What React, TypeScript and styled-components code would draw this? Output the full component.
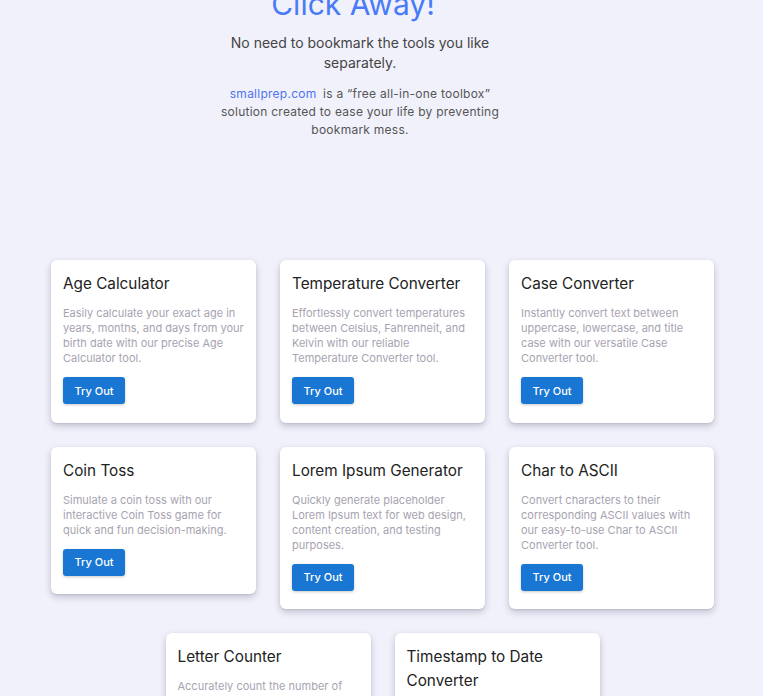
import React from "react";
import styled, { createGlobalStyle } from "styled-components";

const Global = createGlobalStyle`
  html, body { margin: 0; padding: 0; }
  body {
    background: #f1f1fb;
    font-family: Inter, "Noto Sans", sans-serif;
    overflow: hidden;
  }
`;

const Page = styled.div`
  width: 763px;
  height: 696px;
  overflow: hidden;
`;

const Hero = styled.section`
  width: 720px;
  display: flex;
  flex-direction: column;
  align-items: center;
  text-align: center;
`;

const Heading = styled.h1`
  margin: -14px 14px 0 0;
  font-size: 30px;
  line-height: 36px;
  font-weight: 400;
  color: #4a7bf7;
`;

const Lead = styled.p`
  margin: 11px 0 0;
  width: 280px;
  font-size: 14px;
  line-height: 20px;
  color: #444;
`;

const Blurb = styled.p`
  margin: 12px 0 0;
  width: 300px;
  font-size: 12px;
  line-height: 18px;
  letter-spacing: 0.25px;
  color: #555;
`;

const Link = styled.a`
  color: #4f73f2;
  text-decoration: none;
  margin-right: 3px;
`;

const Grid = styled.div`
  box-sizing: border-box;
  max-width: 665px;
  padding-left: 2px;
  margin: 121px auto 0;
  display: flex;
  flex-wrap: wrap;
  justify-content: center;
  align-items: flex-start;
  gap: 24px;
`;

const Card = styled.div`
  width: 205px;
  box-sizing: border-box;
  padding: 12px 12px 18.6px;
  background: #fff;
  border-radius: 6px;
  box-shadow: 0 3px 7px rgba(40, 40, 80, 0.24), 0 1px 2px rgba(40, 40, 80, 0.1);
`;

const Title = styled.h3`
  margin: 0 0 10px;
  font-size: 15.3px;
  line-height: 24px;
  font-weight: 400;
  color: #222;
`;

const Desc = styled.p`
  margin: 0;
  font-size: 11px;
  line-height: 15px;
  color: #a7a3b1;
`;

const Button = styled.button`
  margin-top: 11px;
  width: 62px;
  height: 27px;
  padding: 0;
  border: none;
  border-radius: 3px;
  background: #1976d2;
  color: #fff;
  font-family: inherit;
  font-size: 11px;
  font-weight: 500;
  box-shadow: 0 1px 3px rgba(0, 0, 0, 0.22);
  cursor: pointer;
`;

const tools = [
  {
    title: "Age Calculator",
    desc: "Easily calculate your exact age in years, months, and days from your birth date with our precise Age Calculator tool.",
  },
  {
    title: "Temperature Converter",
    desc: "Effortlessly convert temperatures between Celsius, Fahrenheit, and Kelvin with our reliable Temperature Converter tool.",
  },
  {
    title: "Case Converter",
    desc: "Instantly convert text between uppercase, lowercase, and title case with our versatile Case Converter tool.",
  },
  {
    title: "Coin Toss",
    desc: "Simulate a coin toss with our interactive Coin Toss game for quick and fun decision-making.",
  },
  {
    title: "Lorem Ipsum Generator",
    desc: "Quickly generate placeholder Lorem Ipsum text for web design, content creation, and testing purposes.",
  },
  {
    title: "Char to ASCII",
    desc: "Convert characters to their corresponding ASCII values with our easy-to-use Char to ASCII Converter tool.",
  },
  {
    title: "Letter Counter",
    desc: "Accurately count the number of letters, words, and characters in your text with our Letter Counter tool.",
  },
  {
    title: "Timestamp to Date Converter",
    desc: "Convert Unix timestamps into human-readable dates quickly with our Timestamp to Date Converter tool.",
  },
];

export default function App() {
  return (
    <Page>
      <Global />
      <Hero>
        <Heading>Click Away!</Heading>
        <Lead>No need to bookmark the tools you like separately.</Lead>
        <Blurb>
          <Link href="#">smallprep.com</Link> is a “free all-in-one toolbox” solution created to ease your life by
          preventing bookmark mess.
        </Blurb>
      </Hero>
      <Grid>
        {tools.map((t) => (
          <Card key={t.title}>
            <Title>{t.title}</Title>
            <Desc>{t.desc}</Desc>
            <Button>Try Out</Button>
          </Card>
        ))}
      </Grid>
    </Page>
  );
}
